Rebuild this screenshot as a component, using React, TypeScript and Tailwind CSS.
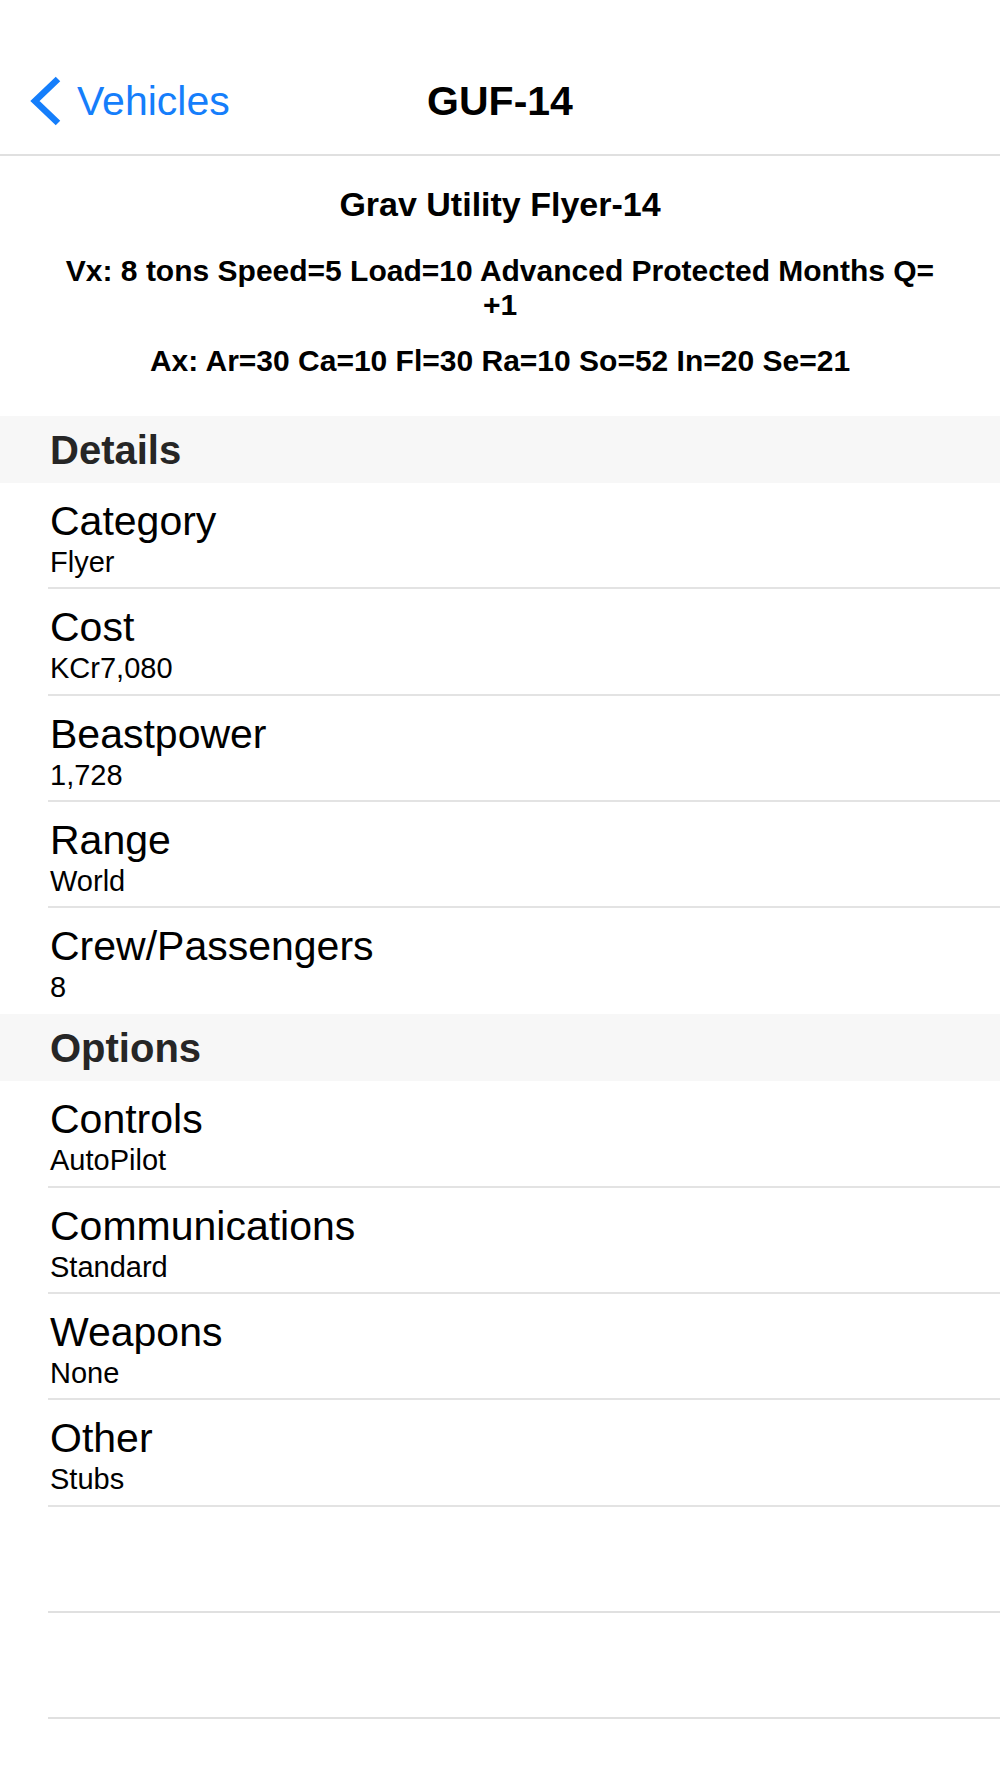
import React from "react";

type Row = { label: string; value: string };

const details: Row[] = [
  { label: "Category", value: "Flyer" },
  { label: "Cost", value: "KCr7,080" },
  { label: "Beastpower", value: "1,728" },
  { label: "Range", value: "World" },
  { label: "Crew/Passengers", value: "8" },
];

const options: Row[] = [
  { label: "Controls", value: "AutoPilot" },
  { label: "Communications", value: "Standard" },
  { label: "Weapons", value: "None" },
  { label: "Other", value: "Stubs" },
];

function BackChevron() {
  return (
    <svg width="32" height="52" viewBox="0 0 32 52" fill="none" className="shrink-0">
      <polyline
        points="28,4 5,26 28,48"
        stroke="#157efb"
        strokeWidth="6.5"
        strokeLinecap="butt"
        strokeLinejoin="miter"
      />
    </svg>
  );
}

function SectionHeader({ title }: { title: string }) {
  return (
    <div className="flex h-[67px] items-center bg-[#f7f7f7] pl-[50px]">
      <span className="text-[40px] font-bold leading-none text-[#262626]">{title}</span>
    </div>
  );
}

function Cell({ row, separator }: { row: Row; separator: boolean }) {
  return (
    <div className="pl-[48px]">
      <div
        className={
          "h-[106.3px] pl-[2px] pt-[16px] " +
          (separator ? "border-b-2 border-[#e3e3e3]" : "")
        }
      >
        <div className="text-[41px] leading-[44px] text-black">{row.label}</div>
        <div className="mt-[3px] text-[29px] leading-[32px] text-black">{row.value}</div>
      </div>
    </div>
  );
}

function EmptyCell() {
  return (
    <div className="pl-[48px]">
      <div className="h-[106.3px] border-b-2 border-[#e0e0e0]" />
    </div>
  );
}

export default function App() {
  return (
    <div
      className="h-[1778px] w-[1000px] overflow-hidden bg-white"
      style={{ fontFamily: '"Liberation Sans", Arial, sans-serif' }}
    >
      {/* nav bar */}
      <div className="border-b-2 border-[#e0e0e0] pt-[48px]">
        <div className="relative flex h-[106px] items-center">
          <div className="flex items-center pl-[30px]">
            <BackChevron />
            <span className="ml-[15px] text-[41px] leading-[48px] text-[#157efb]">Vehicles</span>
          </div>
          <div className="absolute inset-x-0 text-center text-[41px] font-bold leading-[48px] text-black">
            GUF-14
          </div>
        </div>
      </div>

      {/* summary */}
      <div className="px-[55px] pb-[38px] pt-[28px] text-center font-bold text-black">
        <p className="text-[34px] leading-[40px]">Grav Utility Flyer-14</p>
        <p className="mt-[30px] text-[30px] leading-[34px]">
          Vx: 8 tons Speed=5 Load=10 Advanced Protected Months Q= +1
        </p>
        <p className="mt-[22px] text-[30px] leading-[34px]">
          Ax: Ar=30 Ca=10 Fl=30 Ra=10 So=52 In=20 Se=21
        </p>
      </div>

      <SectionHeader title="Details" />
      {details.map((r, i) => (
        <Cell key={r.label} row={r} separator={i < details.length - 1} />
      ))}

      <SectionHeader title="Options" />
      {options.map((r) => (
        <Cell key={r.label} row={r} separator />
      ))}
      <EmptyCell />
      <EmptyCell />
      <EmptyCell />
    </div>
  );
}
